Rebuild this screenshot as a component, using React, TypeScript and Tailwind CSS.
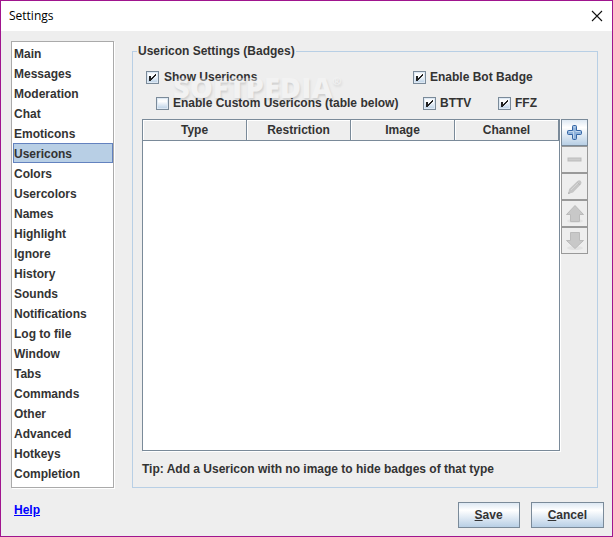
import type { ReactNode } from 'react';

const sections = [
  'Main', 'Messages', 'Moderation', 'Chat', 'Emoticons', 'Usericons', 'Colors', 'Usercolors',
  'Names', 'Highlight', 'Ignore', 'History', 'Sounds', 'Notifications', 'Log to file', 'Window',
  'Tabs', 'Commands', 'Other', 'Advanced', 'Hotkeys', 'Completion'
];

const columns = ['Type', 'Restriction', 'Image', 'Channel'];

function Check({ id, label, checked = false, gap = 'gap-1' }: { id: string; label: string; checked?: boolean; gap?: string }) {
  return (
    <div className={`flex items-center h-4 ${gap}`}>
      <span className="grid">
        <input
          id={id}
          type="checkbox"
          defaultChecked={checked}
          className="peer [grid-area:1/1] appearance-none w-[13px] h-[13px] border border-[#7a8a99] bg-gradient-to-b from-[#eef3f8] via-white via-30% to-[#b8cfe5] shadow-[inset_0_0_0_1px_#dde8f3]"
        />
        <svg
          viewBox="0 0 13 13"
          shapeRendering="crispEdges"
          className="[grid-area:1/1] w-[13px] h-[13px] pointer-events-none invisible peer-checked:visible"
        >
          <path d="M3 5h2v5H3zM5 7h1v2H5zM6 6h1v2H6zM7 5h1v2H7zM8 4h1v2H8zM9 3h1v2H9z" fill="#222" />
        </svg>
      </span>
      <label htmlFor={id}>{label}</label>
    </div>
  );
}

function ToolButton({ label, disabled = false, children }: { label: string; disabled?: boolean; children: ReactNode }) {
  return (
    <button
      type="button"
      aria-label={label}
      disabled={disabled}
      className="flex items-center justify-center w-[27px] h-[27px] border border-[#7a8a99] bg-gradient-to-b from-[#dde8f3] via-white via-30% to-[#b8cfe5] disabled:border-[#999] disabled:bg-none"
    >
      {children}
    </button>
  );
}

function DialogButton({ children }: { children: ReactNode }) {
  return (
    <button
      type="button"
      className="h-[26px] px-4 border border-[#7a8a99] bg-gradient-to-b from-[#dde8f3] via-white via-30% to-[#b8cfe5]"
    >
      {children}
    </button>
  );
}

export default function App() {
  return (
    <div className="min-h-screen flex flex-col border border-[#a0158e] bg-[#eee] font-['Liberation_Sans',Arial,sans-serif] text-xs font-bold text-[#333]">
      {/* Title bar */}
      <header className="flex items-center justify-between h-[30px] px-2 bg-white font-['Open_Sans',sans-serif] font-normal text-black">
        <h1>Settings</h1>
        <button type="button" aria-label="Close">
          <svg width="14" height="12" viewBox="0 0 14 12" stroke="#111" strokeWidth="1.1">
            <path d="M2 1l10 10M12 1L2 11" />
          </svg>
        </button>
      </header>

      <main className="flex-1 flex gap-[18px] pt-[10px] pl-[10px] pr-[14px]">
        {/* Sections */}
        <ul className="w-[103px] shrink-0 border border-[#aaa] bg-white pl-px pt-px pb-1 shadow-[1px_1px_0_#fff]">
          {sections.map((name) => (
            <li
              key={name}
              className={
                name === 'Usericons'
                  ? 'h-5 leading-5 border border-[#6382bf] bg-[#b8cfe5]'
                  : 'h-5 leading-5 border border-transparent'
              }
            >
              {name}
            </li>
          ))}
        </ul>

        {/* Usericon settings */}
        <fieldset className="relative flex-1 min-w-0 flex flex-col border border-[#b8cfe5] px-[9px]">
          <legend className="-ml-[5px] leading-5 px-px">Usericon Settings (Badges)</legend>
          <div className="grid grid-cols-[267px_1fr] pt-2 pl-1">
            <Check id="show" label="Show Usericons" checked gap="gap-[5px]" />
            <Check id="bot" label="Enable Bot Badge" checked />
          </div>

          {/* Watermark */}
          <div
            aria-hidden="true"
            className="absolute left-[40px] top-[14px] flex items-start pointer-events-none select-none opacity-40 font-['Open_Sans',sans-serif] text-[#f8f8f8] [text-shadow:1px_2px_2px_rgb(0_0_0/0.3)]"
          >
            <span className="text-[29px] leading-6 font-extrabold">SOFTPEDIA</span>
            <span className="text-[11px] leading-3">®</span>
          </div>

          <div className="relative grid grid-cols-[267px_75px_1fr] pt-[10px] pl-[14px]">
            <Check id="custom" label="Enable Custom Usericons (table below)" />
            <Check id="bttv" label="BTTV" checked />
            <Check id="ffz" label="FFZ" checked />
          </div>

          <div className="flex-1 flex gap-px pt-2">
            <div className="flex-1 border border-[#7a8a99] bg-white shadow-[1px_1px_0_#fff]">
              <table className="w-full table-fixed border-separate border-spacing-0">
                <thead>
                  <tr>
                    {columns.map((name) => (
                      <th
                        key={name}
                        className="h-5 p-0 leading-5 border-r border-b border-[#7a8a99] bg-[#eee] shadow-[inset_1px_1px_0_#fff]"
                      >
                        {name}
                      </th>
                    ))}
                  </tr>
                </thead>
              </table>
            </div>
            <div className="flex flex-col">
              <ToolButton label="Add">
                <svg width="15" height="15" viewBox="0 0 15 15">
                  <path
                    d="M5.5 1.5Q5.5.5 6.5.5h2q1 0 1 1v4h4q1 0 1 1v2q0 1-1 1h-4v4q0 1-1 1h-2q-1 0-1-1v-4h-4q-1 0-1-1v-2q0-1 1-1h4z"
                    fill="#8fb3dc"
                    stroke="#3465a4"
                  />
                  <path d="M6.5 13V6.5M2 6.5h4.5M8.5 6.5H13M6.5 2h2" fill="none" stroke="#c3d8ee" />
                </svg>
              </ToolButton>
              <ToolButton label="Remove" disabled>
                <svg width="15" height="15" viewBox="0 0 15 15">
                  <rect x="1" y="6" width="13" height="3" fill="#ccc" stroke="#bbb" />
                </svg>
              </ToolButton>
              <ToolButton label="Edit" disabled>
                <svg width="16" height="16" viewBox="0 0 16 16">
                  <path d="M1 15l1.2-5L10.500 2q1.800-1.500 3.300 0t0 3.500L6 13.500z" fill="#c6c6c6" />
                  <path d="M1 15l.7-2 1.300 1.300z" fill="#aaa" />
                  <path d="M4 11l7.500-7.500" stroke="#d6d6d6" />
                  <path d="M10.500 3.500l2.500 2.500" stroke="#b8b8b8" />
                </svg>
              </ToolButton>
              <ToolButton label="Move up" disabled>
                <svg width="20" height="20" viewBox="0 0 20 20">
                  <ellipse cx="10" cy="17" rx="8" ry="2" fill="#e2e2e2" />
                  <path d="M10 1.5L18.5 10.5H14.5V17.5H5.5V10.5H1.5z" fill="#c8c8c8" stroke="#bbb" strokeLinejoin="round" />
                </svg>
              </ToolButton>
              <ToolButton label="Move down" disabled>
                <svg width="20" height="20" viewBox="0 0 20 20">
                  <ellipse cx="10" cy="17" rx="8" ry="2" fill="#e2e2e2" />
                  <path d="M10 17.5L18.5 9.5H14.5V1.5H5.5V9.5H1.5z" fill="#c8c8c8" stroke="#bbb" strokeLinejoin="round" />
                </svg>
              </ToolButton>
            </div>
          </div>
          <p className="py-[9px] leading-[18px]">Tip: Add a Usericon with no image to hide badges of that type</p>
        </fieldset>
      </main>

      <footer className="flex items-start justify-between pt-[14px] pb-2 pl-[13px] pr-2">
        <a href="#help" className="text-[#00f] underline">Help</a>
        <div className="flex gap-[11px]">
          <DialogButton><u>S</u>ave</DialogButton>
          <DialogButton><u>C</u>ancel</DialogButton>
        </div>
      </footer>
    </div>
  );
}
